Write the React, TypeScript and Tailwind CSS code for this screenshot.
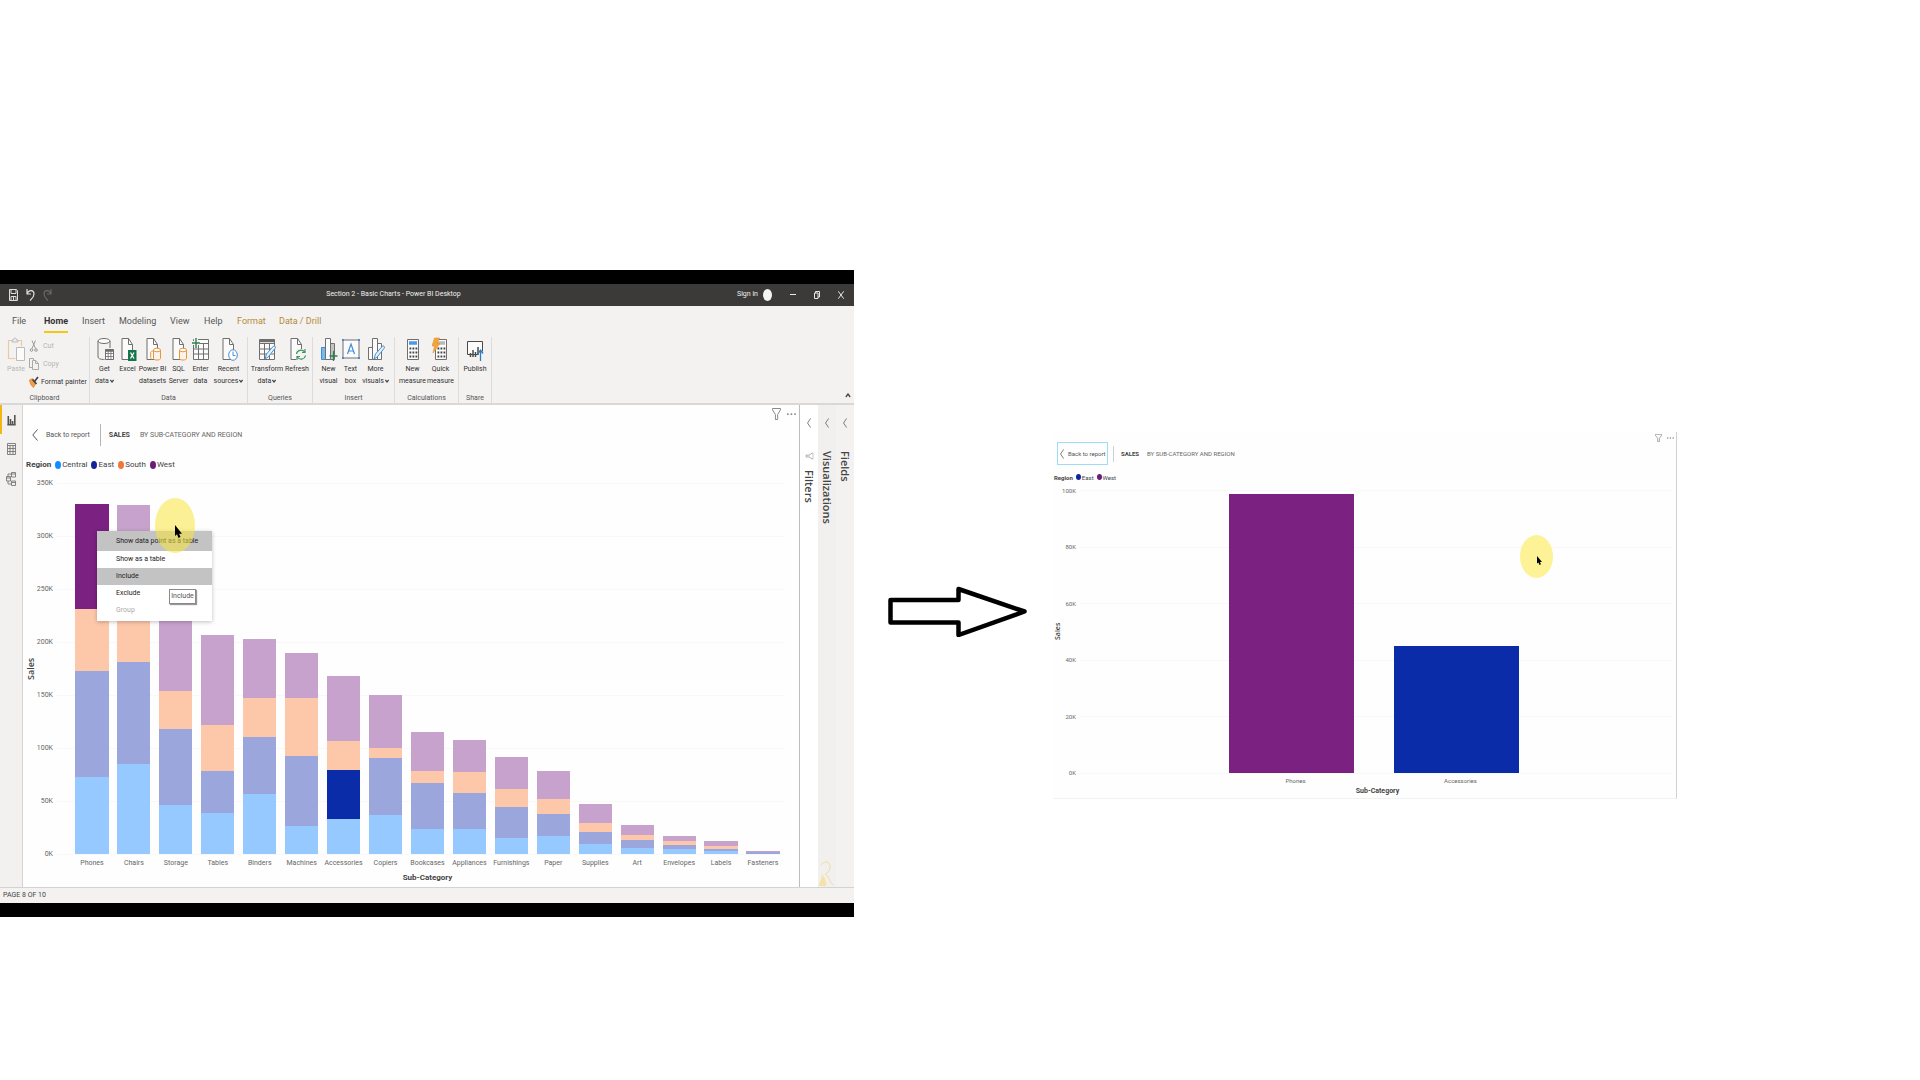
import React from "react";

type Series = "central" | "east" | "south" | "west";

interface Bar {
  name: string;
  values: number[];
  selected?: number;
}

const faded = ["bg-[#95c9ff]", "bg-[#9ba7dc]", "bg-[#fdc7aa]", "bg-[#c7a2cc]"];
const solid = ["bg-[#118dff]", "bg-[#0b2ca9]", "bg-[#f77f3f]", "bg-[#7b2182]"];

const dotFill: Record<Series, string> = {
  central: "bg-[#118dff]",
  east: "bg-[#12239e]",
  south: "bg-[#f0763a]",
  west: "bg-[#6b1c78]",
};

/* Stack heights, bottom to top: Central, East, South, West. The full axis is 371 units. */
const AXIS = 371;
const bars: Bar[] = [
  { name: "Phones", values: [77, 106, 62, 105], selected: 3 },
  { name: "Chairs", values: [90, 102, 62, 95] },
  { name: "Storage", values: [49, 76, 38, 75] },
  { name: "Tables", values: [41, 42, 46, 90] },
  { name: "Binders", values: [60, 57, 39, 59] },
  { name: "Machines", values: [28, 70, 58, 45] },
  { name: "Accessories", values: [35, 49, 29, 65], selected: 1 },
  { name: "Copiers", values: [39, 57, 10, 53] },
  { name: "Bookcases", values: [25, 46, 12, 39] },
  { name: "Appliances", values: [25, 36, 21, 32] },
  { name: "Furnishings", values: [16, 31, 18, 32] },
  { name: "Paper", values: [18, 22, 15, 28] },
  { name: "Supplies", values: [10, 12, 9, 19] },
  { name: "Art", values: [6, 8, 5, 10] },
  { name: "Envelopes", values: [5, 4, 4, 5] },
  { name: "Labels", values: [3, 2, 3, 5] },
  { name: "Fasteners", values: [0, 2, 0, 1] },
];

const line = "#6f6f6f";

function Page({ children }: { children?: React.ReactNode }) {
  return (
    <svg viewBox="0 0 18 24" className="h-6 w-[18px]" fill="none" stroke={line}>
      <path d="M3 1.5h6.5l4 6v15H3z" fill="#fbfbfb" />
      <path d="M9.500 1.500v6h4" />
      {children}
    </svg>
  );
}

function TableGrid({ children }: { children?: React.ReactNode }) {
  return (
    <svg viewBox="0 0 18 24" className="h-6 w-[18px]" fill="none" stroke={line}>
      <path d="M1.500 2.500h15v20h-15z" fill="#fbfbfb" />
      <path d="M1.500 6.500h15M1.500 12h15M1.500 17h15M6.500 6.500v16M11.500 6.500v16" />
      {children}
    </svg>
  );
}

const GetDataIcon = () => (
  <svg viewBox="0 0 18 24" className="h-6 w-[18px]" fill="none" stroke={line}>
    <path d="M2 4v16c0 1.500 2.500 2.500 5.500 2.500h1M14 11V4" />
    <ellipse cx="8" cy="4" rx="6" ry="2.500" fill="#fbfbfb" />
    <path d="M9.500 12.500h8v10h-8z" fill="#fff" />
    <path d="M9.500 13.500h8" strokeWidth="2.500" />
    <path d="M9.500 16.500h8M9.500 19.500h8M12.200 13v10M14.900 13v10" strokeWidth=".8" />
  </svg>
);
const ExcelIcon = () => (
  <Page>
    <path d="M9 13h8.500v11H9z" fill="#15764b" stroke="none" />
    <path d="m11.500 15.500 3.500 6M15 15.500l-3.500 6" stroke="#fff" strokeWidth="1.300" />
  </Page>
);
const Cylinder = ({ double }: { double?: boolean }) => (
  <Page>
    <path d="M9.500 13v8.500c0 2 7 2 7 0V13" fill="#fbf3ea" stroke="#e8963c" />
    <ellipse cx="13" cy="13" rx="3.500" ry="1.800" fill="#fff" stroke="#e8963c" />
    {double && <path d="M7.500 22c-.8-.4-.8-1-.8-1.500v-5c0-1 1-1.500 2.500-1.500" stroke="#e8963c" />}
  </Page>
);
const EnterDataIcon = () => (
  <TableGrid>
    <path d="M0 6h8M4 0v11" stroke="#f3f2f1" strokeWidth="4" />
    <path d="M0 6h8M4 1v10" stroke="#2f8055" strokeWidth="1.400" />
  </TableGrid>
);
const RecentIcon = () => (
  <Page>
    <ellipse cx="13" cy="18" rx="4.300" ry="5.300" fill="#fff" stroke="#4a8fd0" />
    <path d="M13 14.500V18.500h2.500" stroke="#4a8fd0" />
  </Page>
);
const Pencil = () => <path d="m7 22 1.500-5 7-8c1-1 2.500 1 1.700 2.200l-7 8.800z" fill="#e5f1fb" stroke="#4a8fd0" />;
const TransformIcon = () => (
  <TableGrid>
    <path d="M1.500 4h15" strokeWidth="2.500" />
    <Pencil />
  </TableGrid>
);
const RefreshIcon = () => (
  <Page>
    <path d="M8 12h10v11H8z" fill="#f3f2f1" stroke="none" />
    <path d="M8.500 17c.5-4 6-5 8-2M17 12v3.500h-3M17.500 18.500c-.8 4-6 5-8 1.500M9 23v-3.500h3" stroke="#3d9562" strokeWidth="1.200" />
  </Page>
);
const ColumnsIcon = ({ edit }: { edit?: boolean }) => (
  <svg viewBox="0 0 18 24" className="h-6 w-[18px]" fill="none" stroke={line}>
    <path d="M1.500 10.500h4v12h-4z" fill={edit ? "#fbfbfb" : "#7db8ec"} stroke={edit ? line : "#3f8fd6"} />
    <path d="M10.500 6.500h4v16h-4z" fill={edit ? "#fbfbfb" : "#c4c4c4"} />
    <path d="M5.500 1.500h5v21h-5z" fill="#fbfbfb" />
    {edit ? <Pencil /> : <path d="M9.500 19h8M13.500 14v10" stroke="#2f8055" strokeWidth="1.300" />}
  </svg>
);
const TextBoxIcon = () => (
  <svg viewBox="0 0 18 24" className="h-6 w-[18px]" fill="none" stroke={line}>
    <path d="M1 3h16v18H1z" fill="#fbfbfb" />
    <path d="m5.500 17 3.500-10 3.500 10M6.800 14h4.400" stroke="#3f8fd6" strokeWidth="1.200" />
    <path d="M0 2h2v2H0zM16 2h2v2h-2zM0 20h2v2H0zM16 20h2v2h-2z" fill="#3f8fd6" stroke="none" />
  </svg>
);
const CalcIcon = ({ quick }: { quick?: boolean }) => (
  <svg viewBox="0 0 18 24" className="h-6 w-[18px]" fill="none" stroke={line}>
    <path d="M3.500 2.500h11v20h-11z" fill="#fbfbfb" />
    <path d="M5 6h8" stroke={quick ? "#b9b9b9" : "#4a9be6"} strokeWidth="3.500" />
    <path d="M5.500 11.500h8M5.500 15.500h8M5.500 19.500h8" stroke="#444" strokeWidth="2" strokeDasharray="1.800 1.200" />
    {quick && <path d="M2.500 1h5L5 6.500h3L1 16l1.500-7H0z" fill="#f2a53a" stroke="#e8912a" strokeWidth=".6" />}
  </svg>
);
const PublishIcon = () => (
  <svg viewBox="0 0 18 24" className="h-6 w-[18px]" fill="none" stroke="#4b4b4b">
    <path d="M12 17.500H1.500v-13h15v10" fill="#fbfbfb" />
    <path d="M4.500 20v-4M7 20v-7M9.500 20v-5M12 18v-8" strokeWidth="1.500" />
    <path d="M14.500 24V13.500M12 16.500l2.500-3.500 2.500 3.500" stroke="#2d7cc0" strokeWidth="1.300" />
  </svg>
);

const ChevronDown = () => (
  <svg viewBox="0 0 6 6" className="ml-px inline-block size-1" fill="none" stroke="#444" strokeWidth="1.800">
    <path d="m.5 1.500 2.500 3 2.500-3" />
  </svg>
);

const ChevronLeft = ({ className }: { className: string }) => (
  <svg viewBox="0 0 6 12" className={`shrink-0 ${className}`} fill="none" stroke="#555" preserveAspectRatio="none">
    <path d="M5.500.5.800 6l4.700 5.500" />
  </svg>
);

const Funnel = ({ className }: { className: string }) => (
  <svg viewBox="0 0 10 12" className={className} fill="none" stroke="#777" strokeWidth=".9" preserveAspectRatio="none">
    <path d="M.5.500h9v1.300L6.300 6.500v5H3.800v-5L.5 1.800z" />
  </svg>
);

const Dots = ({ className }: { className: string }) => (
  <svg viewBox="0 0 10 2" className={className} fill="#666">
    <path d="M0 .4h1.800v1.400H0zM4 .4h1.800v1.400H4zM8 .4h1.800v1.400H8z" />
  </svg>
);

function Pointer({ spot, arrow }: { spot: string; arrow: string }) {
  return (
    <div className={spot}>
      <svg viewBox="0 0 7 13" className={arrow} preserveAspectRatio="none">
        <path d="M0 0v11l2-1.700L3.500 13l2-1-1.400-3.300H7z" />
      </svg>
    </div>
  );
}

interface Tool {
  icon: React.ReactNode;
  l1: string;
  l2?: string;
  menu?: boolean;
  width: string;
}

function Group({ name, className, tools }: { name: string; className: string; tools: Tool[] }) {
  return (
    <section className={`flex h-[66px] flex-col items-center border-r border-[#dddcda] ${className}`}>
      <div className="flex flex-1 items-start">
        {tools.map((t) => (
          <button key={t.l1 + t.l2} className={`flex flex-col items-center whitespace-nowrap ${t.width}`}>
            {t.icon}
            <span className="mt-0.5 leading-3">{t.l1}</span>
            {t.l2 && (
              <span className="leading-3">
                {t.l2}
                {t.menu && <ChevronDown />}
              </span>
            )}
          </button>
        ))}
      </div>
      <h2 className="text-[7px] leading-[10px] text-[#555]">{name}</h2>
    </section>
  );
}

function Ribbon() {
  return (
    <div className="flex border-b-2 border-[#d9d8d6] bg-[#f3f2f1] pt-px text-[7px] text-[#333]">
      <section className="flex h-[66px] w-[90px] flex-col items-center border-r border-[#dddcda]">
        <div className="flex w-full flex-1 items-start pl-[7px]">
          <button className="flex w-[18px] flex-col items-center text-[#b5b5b5]">
            <svg viewBox="0 0 18 24" className="h-6 w-[18px]" fill="none" stroke="#bbb">
              <path d="M8.500 21.500H1.500v-18h13V9" stroke="#ecc9a4" strokeWidth="1.200" />
              <path d="M5 5V3h1.500c0-2.500 3-2.500 3 0H11v2z" fill="#eee" />
              <path d="M9.500 10.500h8v13h-8z" fill="#fbfbfb" />
            </svg>
            <span className="mt-0.5 leading-3">Paste</span>
          </button>
          <div className="flex flex-col pl-1">
            <button className="flex h-[18px] items-center gap-1 text-[#b5b5b5]">
              <svg viewBox="0 0 10 12" className="h-3 w-[10px]" fill="none" stroke="#999">
                <path d="m3 .5 3.500 8M6.500.5 3 8.500" />
                <circle cx="2.500" cy="10" r="1.300" />
                <circle cx="7" cy="10" r="1.300" />
              </svg>
              Cut
            </button>
            <button className="flex h-[18px] items-center gap-1 text-[#b5b5b5]">
              <svg viewBox="0 0 10 12" className="h-3 w-[10px]" fill="none" stroke="#aaa">
                <path d="M3.500 9.500h-3v-9h4v2M3.500 2.500h3.500l2.500 3v6h-6zM6.500 2.500v3h3" />
              </svg>
              Copy
            </button>
            <button className="flex h-[18px] items-center gap-0.5 whitespace-nowrap">
              <svg viewBox="0 0 10 12" className="h-3 w-[10px]" fill="none">
                <path d="m.5 4 3-1.500L7 7l-2.500 4.500C2 10 1 7 .5 4z" fill="#f0a04b" stroke="#d9822b" strokeWidth=".7" />
                <path d="M3.500 3.500 7.500 8M5.500 5.500l3.500-4.500" stroke="#444" strokeWidth="1.700" />
              </svg>
              Format painter
            </button>
          </div>
        </div>
        <h2 className="text-[7px] leading-[10px] text-[#555]">Clipboard</h2>
      </section>
      <Group
        name="Data"
        className="w-[158px]"
        tools={[
          { icon: <GetDataIcon />, l1: "Get", l2: "data", menu: true, width: "w-[26px]" },
          { icon: <ExcelIcon />, l1: "Excel", width: "w-[20px]" },
          { icon: <Cylinder double />, l1: "Power BI", l2: "datasets", width: "w-[30px]" },
          { icon: <Cylinder />, l1: "SQL", l2: "Server", width: "w-[22px]" },
          { icon: <EnterDataIcon />, l1: "Enter", l2: "data", width: "w-[22px]" },
          { icon: <RecentIcon />, l1: "Recent", l2: "sources", menu: true, width: "w-[34px]" },
        ]}
      />
      <Group
        name="Queries"
        className="w-[65px]"
        tools={[
          { icon: <TransformIcon />, l1: "Transform", l2: "data", menu: true, width: "w-[34px]" },
          { icon: <RefreshIcon />, l1: "Refresh", width: "w-[26px]" },
        ]}
      />
      <Group
        name="Insert"
        className="w-[82px]"
        tools={[
          { icon: <ColumnsIcon />, l1: "New", l2: "visual", width: "w-[24px]" },
          { icon: <TextBoxIcon />, l1: "Text", l2: "box", width: "w-[20px]" },
          { icon: <ColumnsIcon edit />, l1: "More", l2: "visuals", menu: true, width: "w-[30px]" },
        ]}
      />
      <Group
        name="Calculations"
        className="w-[64px]"
        tools={[
          { icon: <CalcIcon />, l1: "New", l2: "measure", width: "w-[28px]" },
          { icon: <CalcIcon quick />, l1: "Quick", l2: "measure", width: "w-[28px]" },
        ]}
      />
      <Group name="Share" className="w-[33px]" tools={[{ icon: <PublishIcon />, l1: "Publish", width: "w-[28px]" }]} />
      <button aria-label="Collapse ribbon" className="mr-[3px] mb-[5px] ml-auto self-end">
        <svg viewBox="0 0 6 5" className="h-[5px] w-1.5" fill="none" stroke="#444" strokeWidth="1.300">
          <path d="m.8 4 2.200-3 2.200 3" />
        </svg>
      </button>
    </div>
  );
}

function TitleBar() {
  return (
    <div className="flex h-[22px] items-center bg-[#3b3a39] pb-px text-[7px] text-[#f0f0f0]">
      <div className="flex w-[53px] items-center gap-2 pl-[9px]">
        <button aria-label="Save">
          <svg viewBox="0 0 9 12" className="h-3 w-[9px]" fill="none" stroke="#ddd">
            <path d="M.5.500h7l1 1v10h-8zM2 .5v4h5v-4M2 11.500v-4h5v4M4.500 8v3" />
          </svg>
        </button>
        <button aria-label="Undo">
          <svg viewBox="0 0 9 12" className="h-3 w-[9px]" fill="none" stroke="#ddd" strokeWidth="1.200">
            <path d="M1 0v5h4M1 5c2-5 7-4 7 0 0 3-2 4.500-4 6.500" />
          </svg>
        </button>
        <button aria-label="Redo">
          <svg viewBox="0 0 9 12" className="h-3 w-[9px]" fill="none" stroke="#686766" strokeWidth="1.200">
            <path d="M8 0v5H4M8 5C6 0 1 1 1 5c0 3 2 4.500 4 6.500" />
          </svg>
        </button>
      </div>
      <h1 className="flex-1 text-center">Section 2 - Basic Charts - Power BI Desktop</h1>
      <div className="flex w-[120px] items-center pl-[3px]">
        <button className="w-[26px] text-left whitespace-nowrap">Sign in</button>
        <span className="h-3 w-[9px] rounded-[50%] bg-[#f4f4f4]" />
        <button aria-label="Minimize" className="ml-[18px] h-px w-1.5 bg-[#e8e8e8]" />
        <button aria-label="Restore" className="ml-[18px]">
          <svg viewBox="0 0 6 8" className="h-2 w-[6px]" fill="none" stroke="#e8e8e8">
            <path d="M.5 2h3.500v5.500H.5zM1.500 2V.5h4v5.500H4" />
          </svg>
        </button>
        <button aria-label="Close" className="ml-[18px]">
          <svg viewBox="0 0 6 8" className="h-2 w-[6px]" fill="none" stroke="#e8e8e8">
            <path d="m.3.3 5.400 7.400M5.700.3.300 7.700" />
          </svg>
        </button>
      </div>
    </div>
  );
}

function Tabs() {
  const base = "flex h-[27px] flex-col items-start justify-end";
  const tabs = [
    ["File", "w-8 text-[#555]"],
    ["Home", "w-[38px] font-bold text-[#333]"],
    ["Insert", "w-[37px] text-[#555]"],
    ["Modeling", "w-[51px] text-[#555]"],
    ["View", "w-[34px] text-[#555]"],
    ["Help", "w-[33px] text-[#555]"],
    ["Format", "w-[42px] text-[#b5893a]"],
    ["Data / Drill", "w-[50px] text-[#b5893a]"],
  ];
  return (
    <nav className="flex bg-[#f3f2f1] pb-[3px] pl-3 text-[9px]">
      {tabs.map(([label, cls]) => (
        <button key={label} className={`${base} ${cls}`}>
          <span className={`border-b-2 pb-1 leading-[12px] ${label === "Home" ? "border-[#f2c811]" : "border-transparent"}`}>
            {label}
          </span>
        </button>
      ))}
    </nav>
  );
}

function Rail() {
  return (
    <nav className="flex w-[23px] flex-col items-center border-r border-[#d4d3d1] bg-[#f3f1ef]">
      <button aria-label="Report" className="flex h-[29px] w-full items-center border-l-2 border-[#f2b811] pl-[5px]">
        <svg viewBox="0 0 9 12" className="h-3 w-[9px]" fill="none" stroke="#555" strokeWidth="1.600">
          <path d="M1.300 2v9M3.500 5v6M5.600 7v4M7.800 1v10M.3 10.800h8.400" />
        </svg>
      </button>
      <button aria-label="Data" className="flex h-[29px] items-center">
        <svg viewBox="0 0 9 12" className="h-3 w-[9px]" fill="none" stroke="#777" strokeWidth=".9">
          <path d="M.5.500h8v11h-8zM.5 2.500h8M.5 5.500h8M.5 8.500h8M3 2.500v9M6 2.500v9" />
        </svg>
      </button>
      <button aria-label="Model" className="flex h-[31px] items-center">
        <svg viewBox="0 0 10 14" className="h-[14px] w-[10px]" fill="none" stroke="#777" strokeWidth=".9">
          <path d="M5.500.500h4v4.500h-4zM5.500 9h4v4.500h-4zM.5 4.500h4V9h-4zM5.500 2H2v2.500M2 9v3h3.500M5.500 2h4M5.500 10.500h4M.5 6h4" />
        </svg>
      </button>
    </nav>
  );
}

function Ticks({ labels, className }: { labels: string[]; className: string }) {
  return (
    <div className={`flex flex-col justify-between text-right text-[#666] ${className}`}>
      {labels.map((l) => (
        <div key={l} className="flex h-0 items-center justify-end">
          {l}
        </div>
      ))}
    </div>
  );
}

function GridLines({ count }: { count: number }) {
  return (
    <div className="absolute inset-0 flex flex-col justify-between">
      {Array.from({ length: count }, (_, i) => (
        <div key={i} className="-mb-px h-px bg-[#f8f8f7]" />
      ))}
    </div>
  );
}

function LegendItem({ series, label, dot }: { series: Series; label: string; dot: string }) {
  return (
    <li className="flex items-center gap-px">
      <span className={`rounded-[50%] ${dot} ${dotFill[series]}`} />
      {label}
    </li>
  );
}

function ContextMenu() {
  const item = "block w-full pl-[19px] text-left leading-[17px] h-[17px]";
  return (
    <div className="absolute top-[126px] left-[74px] h-[90px] w-[115px] bg-white text-[7px] text-[#222] shadow-[0_1px_4px_rgba(0,0,0,0.25)]">
      <button className="block h-5 w-full bg-[#c3c3c3] pl-[19px] text-left leading-5">Show data point as a table</button>
      <button className={item}>Show as a table</button>
      <button className={`${item} bg-[#c3c3c3]`}>Include</button>
      <button className={item}>Exclude</button>
      <button className={`${item} text-[#aaa]`}>Group</button>
      <div className="absolute top-[58px] left-[72px] flex h-[15px] w-[27px] items-center justify-center border border-[#8a8a8a] bg-white text-[#555] shadow-[1px_1px_1px_rgba(0,0,0,0.4)]">
        Include
      </div>
    </div>
  );
}

function MainChart() {
  return (
    <main className="relative flex-1 border-r border-[#bdbdbd] bg-[#fefefe]">
      <header className="flex items-start justify-between">
        <div className="flex items-center pt-[19px] pl-[9px]">
          <button className="flex items-center gap-2 text-[7px] text-[#555]">
            <ChevronLeft className="h-3 w-1.5" />
            Back to report
          </button>
          <span className="ml-2.5 h-[22px] w-px bg-[#b5b5b5]" />
          <h2 className="ml-2 text-[7px] font-bold text-[#444]">SALES</h2>
          <p className="ml-2.5 text-[7px] text-[#666]">BY SUB-CATEGORY AND REGION</p>
        </div>
        <div className="flex items-center gap-1.5 pt-[3px] pr-[3px]">
          <Funnel className="h-3 w-[9px]" />
          <Dots className="h-0.5 w-[9px]" />
        </div>
      </header>
      <div className="mt-[13px] flex h-3 items-center gap-1 pl-[3px] text-[8px] text-[#444]">
        <b>Region</b>
        <ul className="flex gap-1">
          <LegendItem series="central" label="Central" dot="h-2 w-1.5" />
          <LegendItem series="east" label="East" dot="h-2 w-1.5" />
          <LegendItem series="south" label="South" dot="h-2 w-1.5" />
          <LegendItem series="west" label="West" dot="h-2 w-1.5" />
        </ul>
      </div>
      <div className="mt-3 flex h-[371px] pr-[15px]">
        <div className="flex w-[15px] rotate-180 items-center justify-center font-['Open_Sans',sans-serif] text-[9px] leading-[10px] font-semibold text-[#444] [writing-mode:vertical-rl]">
          Sales
        </div>
        <Ticks className="w-[15px] text-[7px]" labels={["350K", "300K", "250K", "200K", "150K", "100K", "50K", "0K"]} />
        <div className="relative ml-1 flex-1 pl-3.5">
          <GridLines count={8} />
          <div className="relative flex h-full items-end">
            {bars.map((b) => (
              <div key={b.name} className="flex h-full flex-1 flex-col-reverse items-center">
                {b.values.map((v, i) => (
                  <div
                    key={i}
                    className={`w-[79%] ${b.selected === i ? solid[i] : faded[i]}`}
                    style={{ height: `${(v / AXIS) * 100}%` }}
                  />
                ))}
              </div>
            ))}
          </div>
        </div>
      </div>
      <div className="mt-[3px] flex h-3 items-center pr-[15px] pl-12 text-[7px] text-[#666]">
        {bars.map((b) => (
          <span key={b.name} className="flex flex-1 basis-0 justify-center whitespace-nowrap">
            {b.name}
          </span>
        ))}
      </div>
      <div className="mt-0.5 pb-0.5 pl-[33px] text-center text-[8px] leading-[14px] font-bold text-[#444]">Sub-Category</div>
      <ContextMenu />
      <Pointer
        spot="absolute top-[93px] left-[132px] h-[55px] w-10 rounded-[50%] bg-[#f7e63c]/55 flex pt-[27px] pl-5"
        arrow="h-[13px] w-[7px] shrink-0"
      />
    </main>
  );
}

function SidePanes() {
  const title = "font-['Open_Sans',sans-serif] text-[11px] leading-[14px] font-semibold text-[#444] [writing-mode:vertical-rl]";
  return (
    <aside className="relative flex">
      <section className="flex w-[18px] flex-col items-center bg-white pt-[13px]">
        <ChevronLeft className="h-2.5 w-1" />
        <Funnel className="mt-6 h-2 w-[7px] shrink-0 rotate-90" />
        <h2 className={`mt-[10px] ${title}`}>Filters</h2>
      </section>
      <section className="flex w-[18px] flex-col items-center bg-[#f1f0ef] pt-[13px]">
        <ChevronLeft className="h-2.5 w-1" />
        <h2 className={`mt-[23px] ${title}`}>Visualizations</h2>
      </section>
      <section className="flex w-[18px] flex-col items-center bg-[#f3f2f1] pt-[13px]">
        <ChevronLeft className="h-2.5 w-1" />
        <h2 className={`mt-[23px] ${title}`}>Fields</h2>
      </section>
      <svg viewBox="0 0 18 26" className="absolute bottom-0 left-[18px] h-[26px] w-[18px]" fill="none" stroke="#f0dd9a">
        <path d="M3 4c3-5 10-4 9 3-.5 4-3 5-5 6 3 1 4 7 8 11" />
        <path d="M1 25c0-4 3-6 3-12 3 4 5 8 4 12z" fill="#f3e3a8" stroke="none" />
      </svg>
    </aside>
  );
}

function FocusChart() {
  return (
    <section className="relative mt-[162px] border-r border-b border-r-[#d2d2d2] border-b-[#f2f2f2] bg-[#fefefe]">
      <header className="flex items-start justify-between">
        <div className="flex items-center pt-2.5 pl-1">
          <button className="flex h-[23px] w-[51px] items-center gap-1 border border-[#9cdcf6] pl-0.5 text-[6px] whitespace-nowrap text-[#555]">
            <ChevronLeft className="h-2.5 w-1" />
            Back to report
          </button>
          <span className="ml-[5px] h-4 w-px bg-[#d0d0d0]" />
          <h2 className="ml-[7px] text-[6px] font-bold text-[#444]">SALES</h2>
          <p className="ml-2 text-[6px] text-[#666]">BY SUB-CATEGORY AND REGION</p>
        </div>
        <div className="flex items-center gap-[5px] pt-0.5 pr-0.5">
          <Funnel className="h-2 w-[7px]" />
          <Dots className="h-0.5 w-[7px]" />
        </div>
      </header>
      <div className="mt-1.5 flex h-3 items-center gap-[3px] pl-px text-[6px] text-[#444]">
        <b>Region</b>
        <ul className="flex gap-[3px]">
          <LegendItem series="east" label="East" dot="h-1.5 w-[5px]" />
          <LegendItem series="west" label="West" dot="h-1.5 w-[5px]" />
        </ul>
      </div>
      <div className="mt-[7px] flex h-[283px] pr-1">
        <div className="flex w-2.5 rotate-180 items-center justify-center font-['Open_Sans',sans-serif] text-[7px] leading-[10px] font-semibold text-[#444] [writing-mode:vertical-rl]">
          Sales
        </div>
        <Ticks className="w-[13px] text-[6px]" labels={["100K", "80K", "60K", "40K", "20K", "0K"]} />
        <div className="relative ml-1 flex-1 pr-[133px] pl-[129px]">
          <GridLines count={6} />
          <div className="relative flex h-full items-end">
            <div className="flex h-full flex-1 items-end justify-center">
              <div className="h-[98.6%] w-[76%] bg-[#7b2182]" />
            </div>
            <div className="flex h-full flex-1 items-end justify-center">
              <div className="h-[44.8%] w-[76%] bg-[#0b2ca9]" />
            </div>
          </div>
        </div>
      </div>
      <div className="mt-0.5 flex h-2.5 items-center pr-[133px] pl-[160px] text-[6px] text-[#666]">
        <span className="flex-1 text-center">Phones</span>
        <span className="flex-1 text-center">Accessories</span>
      </div>
      <div className="pb-px pl-[26px] text-center text-[7px] leading-3 font-bold text-[#444]">Sub-Category</div>
      <Pointer
        spot="absolute top-[103px] left-[75%] h-[43px] w-[33px] rounded-[50%] bg-[#fdf295] flex pt-[21px] pl-[17px]"
        arrow="h-[9px] w-[5px] shrink-0"
      />
    </section>
  );
}

export default function App() {
  return (
    <div className="grid min-h-screen grid-cols-[854fr_199fr_624fr_243fr] items-start bg-white pt-[270px] font-[Roboto,sans-serif]">
      <div className="border-y-[14px] border-black">
        <TitleBar />
        <Tabs />
        <Ribbon />
        <div className="flex">
          <Rail />
          <MainChart />
          <SidePanes />
        </div>
        <footer className="border-t border-[#d4d3d1] bg-[#f3f2f1] pl-[3px] text-[7px] leading-[15px] text-[#444]">PAGE 8 OF 10</footer>
      </div>
      <div className="flex justify-center pt-[315px] pl-[7px]">
        <svg viewBox="0 0 140 52" className="h-[52px] w-[140px]" fill="none" stroke="#000" strokeWidth="4.500" strokeLinejoin="round">
          <path d="M3.500 15h68V4l66 22.500L71.500 50V37.500h-68z" />
        </svg>
      </div>
      <FocusChart />
    </div>
  );
}
